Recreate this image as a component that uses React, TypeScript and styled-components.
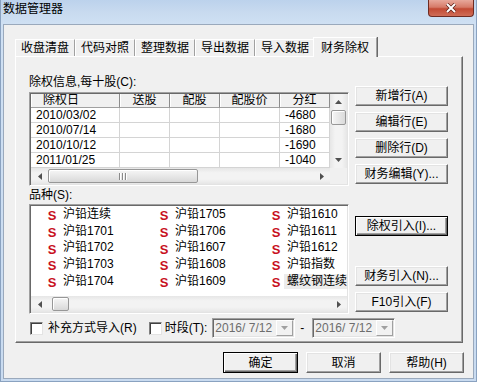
import React from "react";
import styled, { createGlobalStyle, css } from "styled-components";

const GlobalStyle = createGlobalStyle`
  html, body { margin: 0; padding: 0; }
  body {
    background: #c6d9ef;
    font-family: "Liberation Sans", "Noto Sans CJK SC", sans-serif;
    font-size: 12px;
    line-height: 14px;
    color: #000;
  }
  *, *::before, *::after { box-sizing: border-box; }
`;

const raised = css`
  border: 1px solid;
  border-color: #ffffff #696969 #696969 #ffffff;
  box-shadow: inset -1px -1px 0 #a0a0a0, inset 1px 1px 0 #e3e3e3;
`;

const sunken = css`
  border: 1px solid;
  border-color: #a0a0a0 #ffffff #ffffff #a0a0a0;
  box-shadow: inset 1px 1px 0 #696969, inset -1px -1px 0 #e3e3e3;
  padding: 1px;
`;

const Window = styled.div`
  width: 477px;
  height: 382px;
  display: flex;
  flex-direction: column;
  background: linear-gradient(180deg, #bcd2ec 0, #c8daef 12px, #cfe0f3 24px, #c9dbf0 100%);
  border: 1px solid #8aa2c0;
  border-top: 0;
`;

const TitleBar = styled.div`
  height: 24px;
  flex: none;
  display: flex;
  justify-content: space-between;
  align-items: flex-start;
  padding-left: 2px;
`;

const Title = styled.div`
  margin-top: 2px;
  line-height: 14px;
  color: #000;
`;

const CloseButton = styled.div`
  width: 46px;
  height: 17px;
  margin-right: 2px;
  border: 1px solid #6e2b22;
  border-top: 0;
  border-radius: 0 0 4px 4px;
  background: linear-gradient(180deg, #e7a89b 0%, #d67a68 45%, #c24a34 55%, #cf6d57 100%);
  display: flex;
  align-items: center;
  justify-content: center;
`;

const Client = styled.div`
  flex: 1;
  margin: 0 2px 2px;
  border: 1px solid #9aa9bc;
  background: #f0f0f0;
  display: flex;
  flex-direction: column;
`;

const TabStrip = styled.div`
  margin-top: 12px;
  height: 19px;
  padding-left: 11px;
  display: flex;
  align-items: flex-end;
`;

const Tab = styled.div<{ $active?: boolean }>`
  width: 60px;
  height: 17px;
  display: flex;
  align-items: center;
  justify-content: center;
  border-top: 1px solid #fff;
  border-left: 1px solid #fff;
  border-right: 1px solid #a0a0a0;
  background: #f0f0f0;
  ${(p) =>
    p.$active &&
    css`
      width: 64px;
      height: 20px;
      margin: 0 -2px -1px;
      position: relative;
      z-index: 1;
      box-shadow: 1px 0 0 #696969;
    `}
`;

const Panel = styled.div`
  margin-left: 11px;
  width: 448px;
  height: 287px;
  border: 1px solid;
  border-color: #fff #696969 #696969 #fff;
  box-shadow: inset -1px -1px 0 #a0a0a0;
  padding-left: 13px;
  display: flex;
  flex-direction: column;
`;

const Row = styled.div<{ $mt?: number }>`
  display: flex;
  gap: 6px;
  margin-top: ${(p) => p.$mt ?? 0}px;
`;

const Column = styled.div<{ $pt?: number; $w?: number }>`
  display: flex;
  flex-direction: column;
  padding-top: ${(p) => p.$pt ?? 0}px;
  width: ${(p) => (p.$w ? `${p.$w}px` : "auto")};
`;

const Label = styled.div<{ $mb?: number }>`
  height: 14px;
  line-height: 14px;
  margin-bottom: ${(p) => p.$mb ?? 0}px;
  white-space: pre;
`;

const Frame = styled.div<{ $h: number; $cols: string }>`
  ${sunken}
  width: 320px;
  height: ${(p) => p.$h}px;
  background: #fff;
  display: grid;
  grid-template-columns: ${(p) => p.$cols};
  grid-template-rows: 1fr 16px;
  overflow: hidden;
`;

const GridArea = styled.div`
  display: grid;
  grid-template-columns: 89px 50px 50px 60px 50px;
  grid-auto-rows: 15px;
  grid-template-rows: 14px;
  overflow: hidden;
`;

const HeadCell = styled.div<{ $left?: boolean }>`
  height: 14px;
  line-height: 13px;
  background: #f0f0f0;
  border-right: 1px solid #8c8c8c;
  border-bottom: 1px solid #a0a0a0;
  box-shadow: inset 1px 0 0 #fff;
  text-align: ${(p) => (p.$left ? "left" : "center")};
  padding-left: ${(p) => (p.$left ? 12 : 0)}px;
  white-space: nowrap;
  overflow: hidden;
`;

const Cell = styled.div`
  height: 15px;
  line-height: 14px;
  padding-left: 5px;
  border-right: 1px solid #d4d4d4;
  border-bottom: 1px solid #d4d4d4;
  white-space: nowrap;
  overflow: hidden;
`;

const VTrack = styled.div`
  display: flex;
  flex-direction: column;
  background: linear-gradient(90deg, #e6e6e6, #f3f3f3 30%, #f3f3f3 70%, #e6e6e6);
`;

const HTrack = styled.div`
  display: flex;
  align-items: stretch;
  background: linear-gradient(180deg, #e6e6e6, #f3f3f3 30%, #f3f3f3 70%, #e6e6e6);
`;

const ArrowBox = styled.div<{ $w: number; $h: number }>`
  width: ${(p) => p.$w}px;
  height: ${(p) => p.$h}px;
  flex: none;
  display: flex;
  align-items: center;
  justify-content: center;
`;

const Spacer = styled.div`
  flex: 1;
`;

const VThumb = styled.div`
  margin: 0 1px;
  height: 15px;
  border: 1px solid #979797;
  border-radius: 2px;
  background: linear-gradient(90deg, #f6f6f6, #e8e8e8 50%, #dadada);
  box-shadow: inset 1px 1px 0 #fff;
`;

const HThumb = styled.div<{ $w: number; $ml?: number }>`
  width: ${(p) => p.$w}px;
  margin: 1px 0 1px ${(p) => p.$ml ?? 0}px;
  border: 1px solid #979797;
  border-radius: 2px;
  background: linear-gradient(180deg, #f6f6f6, #e8e8e8 50%, #d8d8d8);
  box-shadow: inset 1px 1px 0 #fff;
  display: flex;
  align-items: center;
  justify-content: center;
`;

const Corner = styled.div`
  background: #f0f0f0;
`;

const ItemsArea = styled.div`
  display: grid;
  grid-auto-flow: column;
  grid-template-rows: repeat(5, 16.7px);
  grid-auto-columns: 112px;
  padding-left: 13px;
  overflow: hidden;
`;

const Item = styled.div`
  display: flex;
  align-items: center;
  white-space: nowrap;
  line-height: 14px;
`;

const SIcon = styled.span`
  width: 16px;
  flex: none;
  text-align: center;
  padding-top: 3px;
  font-family: "Liberation Sans", sans-serif;
  font-weight: bold;
  font-size: 13px;
  line-height: 13px;
  color: #c8101e;
`;

const ItemText = styled.span<{ $sel?: boolean }>`
  margin-left: ${(p) => (p.$sel ? 0 : 3)}px;
  padding: 0 ${(p) => (p.$sel ? 3 : 0)}px;
  background: ${(p) => (p.$sel ? "#ececec" : "transparent")};
  line-height: 15px;
`;

const Btn = styled.button<{ $default?: boolean; $w?: number; $h?: number; $mt?: number }>`
  width: ${(p) => p.$w ?? 93}px;
  height: ${(p) => p.$h ?? 20}px;
  margin: ${(p) => p.$mt ?? 0}px 0 0 0;
  padding: 0;
  font: inherit;
  color: #000;
  background: #f0f0f0;
  display: flex;
  align-items: center;
  justify-content: center;
  white-space: pre;
  ${raised}
  ${(p) =>
    p.$default &&
    css`
      border: 1px solid #000;
      box-shadow: inset 1px 1px 0 #fff, inset -1px -1px 0 #696969, inset -2px -2px 0 #a0a0a0;
    `}
`;

const OptionsRow = styled.div`
  margin-top: 4px;
  height: 20px;
  display: flex;
  align-items: center;
`;

const CheckBox = styled.span<{ $ml: number }>`
  width: 13px;
  height: 13px;
  flex: none;
  margin-left: ${(p) => p.$ml}px;
  background: #fff;
  border: 1px solid;
  border-color: #808080 #e3e3e3 #e3e3e3 #808080;
  box-shadow: inset 1px 1px 0 #404040;
`;

const OptText = styled.span<{ $ml: number }>`
  margin-left: ${(p) => p.$ml}px;
  white-space: pre;
`;

const DatePicker = styled.div<{ $ml: number }>`
  ${sunken}
  width: 83px;
  height: 20px;
  margin-left: ${(p) => p.$ml}px;
  background: #f0f0f0;
  display: flex;
  align-items: stretch;
`;

const DateText = styled.span`
  flex: 1;
  padding-left: 1px;
  line-height: 16px;
  color: #6d6d6d;
  white-space: pre;
`;

const DropBtn = styled.span`
  width: 17px;
  flex: none;
  border: 1px solid;
  border-color: #fff #a0a0a0 #a0a0a0 #fff;
  background: #f2f2f2;
  display: flex;
  align-items: center;
  justify-content: center;
`;

const Dash = styled.span`
  margin-left: 5px;
`;

const DialogButtons = styled.div`
  margin-top: 9px;
  display: flex;
  justify-content: flex-end;
  gap: 8px;
  padding-right: 9px;
`;

const Tri = ({ dir, color = "#505050" }: { dir: "up" | "down" | "left" | "right"; color?: string }) => {
  const pts: Record<string, string> = {
    up: "0,4 7,4 3.5,0",
    down: "0,0 7,0 3.5,4",
    left: "4,0 4,7 0,3.5",
    right: "0,0 0,7 4,3.5",
  };
  const vertical = dir === "up" || dir === "down";
  return (
    <svg width={vertical ? 7 : 4} height={vertical ? 4 : 7} viewBox={vertical ? "0 0 7 4" : "0 0 4 7"}>
      <polygon points={pts[dir]} fill={color} />
    </svg>
  );
};

const Grip = () => (
  <svg width="8" height="7" viewBox="0 0 8 7">
    {[0, 3, 6].map((x) => (
      <g key={x}>
        <rect x={x} y={0} width={1} height={7} fill="#8a8a8a" />
        <rect x={x + 1} y={0} width={1} height={7} fill="#ffffff" />
      </g>
    ))}
  </svg>
);

const tabs = ["收盘清盘", "代码对照", "整理数据", "导出数据", "导入数据", "财务除权"];
const rows = [
  ["2010/03/02", "-4680"],
  ["2010/07/14", "-1680"],
  ["2010/10/12", "-1690"],
  ["2011/01/25", "-1040"],
];
const items = [
  "沪铅连续", "沪铅1701", "沪铅1702", "沪铅1703", "沪铅1704",
  "沪铅1705", "沪铅1706", "沪铅1607", "沪铅1608", "沪铅1609",
  "沪铅1610", "沪铅1611", "沪铅1612", "沪铅指数", "螺纹钢连续",
];

export default function App() {
  return (
    <>
      <GlobalStyle />
      <Window>
        <TitleBar>
          <Title>数据管理器</Title>
          <CloseButton>
            <svg width="12" height="10" viewBox="0 0 12 10">
              <path d="M2 1 L10 9 M10 1 L2 9" stroke="#5a1e16" strokeWidth="3.4" />
              <path d="M2 1 L10 9 M10 1 L2 9" stroke="#ffffff" strokeWidth="2" />
            </svg>
          </CloseButton>
        </TitleBar>
        <Client>
          <TabStrip>
            {tabs.map((t, i) => (
              <Tab key={t} $active={i === tabs.length - 1}>
                {t}
              </Tab>
            ))}
          </TabStrip>
          <Panel>
            <Row>
              <Column $pt={18} $w={320}>
                <Label $mb={3}>除权信息,每十股(C):</Label>
                <Frame $h={94} $cols="1fr 17px">
                  <GridArea>
                    <HeadCell $left>除权日</HeadCell>
                    <HeadCell>送股</HeadCell>
                    <HeadCell>配股</HeadCell>
                    <HeadCell>配股价</HeadCell>
                    <HeadCell>分红</HeadCell>
                    {rows.map(([d, v]) => (
                      <React.Fragment key={d}>
                        <Cell>{d}</Cell>
                        <Cell />
                        <Cell />
                        <Cell />
                        <Cell>{v}</Cell>
                      </React.Fragment>
                    ))}
                  </GridArea>
                  <VTrack>
                    <ArrowBox $w={17} $h={16}>
                      <Tri dir="up" />
                    </ArrowBox>
                    <VThumb />
                    <Spacer />
                    <ArrowBox $w={17} $h={16}>
                      <Tri dir="down" />
                    </ArrowBox>
                  </VTrack>
                  <HTrack>
                    <ArrowBox $w={17} $h={16}>
                      <Tri dir="left" />
                    </ArrowBox>
                    <HThumb $w={150}>
                      <Grip />
                    </HThumb>
                    <Spacer />
                    <ArrowBox $w={17} $h={16}>
                      <Tri dir="right" />
                    </ArrowBox>
                  </HTrack>
                  <Corner />
                </Frame>
              </Column>
              <Column $pt={29}>
                <Btn>新增行(A)</Btn>
                <Btn $mt={6}>编辑行(E)</Btn>
                <Btn $mt={6}>删除行(D)</Btn>
                <Btn $mt={6}>财务编辑(Y)...</Btn>
              </Column>
            </Row>
            <Row $mt={2}>
              <Column $w={320}>
                <Label $mb={2}>品种(S):</Label>
                <Frame $h={110} $cols="1fr">
                  <ItemsArea>
                    {items.map((it, i) => (
                      <Item key={it}>
                        <SIcon>S</SIcon>
                        <ItemText $sel={i === items.length - 1}>{it}</ItemText>
                      </Item>
                    ))}
                  </ItemsArea>
                  <HTrack>
                    <ArrowBox $w={17} $h={16}>
                      <Tri dir="left" />
                    </ArrowBox>
                    <HThumb $w={17} $ml={4} />
                    <Spacer />
                    <ArrowBox $w={17} $h={16}>
                      <Tri dir="right" />
                    </ArrowBox>
                  </HTrack>
                </Frame>
              </Column>
              <Column $pt={28}>
                <Btn $default>除权引入(I)...</Btn>
                <Btn $mt={30}>财务引入(N)...</Btn>
                <Btn $mt={6}>F10引入(F)</Btn>
              </Column>
            </Row>
            <OptionsRow>
              <CheckBox $ml={1} />
              <OptText $ml={5}>补充方式导入(R)</OptText>
              <CheckBox $ml={12} />
              <OptText $ml={3}>时段(T):</OptText>
              <DatePicker $ml={5}>
                <DateText>2016/ 7/12</DateText>
                <DropBtn>
                  <Tri dir="down" color="#a0a0a0" />
                </DropBtn>
              </DatePicker>
              <Dash>-</Dash>
              <DatePicker $ml={8}>
                <DateText>2016/ 7/12</DateText>
                <DropBtn>
                  <Tri dir="down" color="#a0a0a0" />
                </DropBtn>
              </DatePicker>
            </OptionsRow>
          </Panel>
          <DialogButtons>
            <Btn $default $w={75} $h={21}>确定</Btn>
            <Btn $w={75} $h={21}>取消</Btn>
            <Btn $w={75} $h={21}>帮助(H)</Btn>
          </DialogButtons>
        </Client>
      </Window>
    </>
  );
}
